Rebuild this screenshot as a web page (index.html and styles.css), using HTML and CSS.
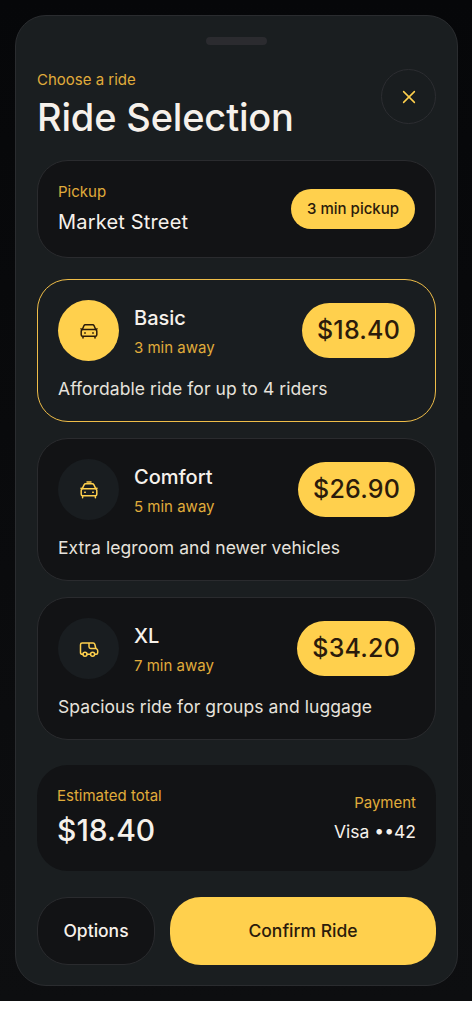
FILE: index.html
```html
<!DOCTYPE html>
<html lang="en">
<head>
<meta charset="utf-8">
<title>Ride Selection</title>
<link rel="stylesheet" href="styles.css">
</head>
<body>
<main class="screen">
  <section class="sheet">
    <div class="handle"></div>
    <header class="header">
      <div>
        <p class="label">Choose a ride</p>
        <h1 class="title">Ride Selection</h1>
      </div>
      <button class="close" aria-label="Close">
        <svg width="20" height="20" viewBox="0 0 20 20"><path d="M4.6 4.6 15.4 15.4M15.4 4.6 4.6 15.4"/></svg>
      </button>
    </header>

    <section class="card pickup">
      <div>
        <p class="label">Pickup</p>
        <p class="place">Market Street</p>
      </div>
      <span class="eta">3 min pickup</span>
    </section>

    <div class="rides">
      <article class="card ride selected">
        <div class="ride-top">
          <span class="icon"><svg width="20" height="20" viewBox="0 0 20 20"><path d="M3.4 8.3 4.9 4.7Q5.3 3.8 6.3 3.8H13.7Q14.7 3.8 15.1 4.7L16.6 8.3M2 7.9 3.4 8.6M16.6 8.6 18 7.9M4.2 8.6H15.8Q17.8 8.6 17.8 10.4V13.8Q17.8 15.3 16.4 15.3H3.6Q2.2 15.3 2.2 13.8V10.4Q2.2 8.6 4.2 8.6M4 15.3V17M16 15.3V17M5.7 12H6.3M13.7 12H14.3"/></svg></span>
          <div class="ride-info">
            <h2 class="name">Basic</h2>
            <p class="label">3 min away</p>
          </div>
          <span class="price">$18.40</span>
        </div>
        <p class="desc">Affordable ride for up to 4 riders</p>
      </article>
      <article class="card ride">
        <div class="ride-top">
          <span class="icon"><svg width="20" height="20" viewBox="0 0 20 20"><path d="M8 1.9H12M3.4 8.3 5.2 4.7Q5.6 3.8 6.6 3.8H13.4Q14.4 3.8 14.8 4.7L16.6 8.3M2 8.3 3.4 8.8M16.6 8.8 18 8.3M4.2 8.8H15.8Q17.8 8.8 17.8 10.6V14.3Q17.8 15.8 16.4 15.8H3.6Q2.2 15.8 2.2 14.3V10.6Q2.2 8.8 4.2 8.8M3.6 15.8V17.8M16.4 15.8V17.8M5.7 12.2H6.3M13.7 12.2H14.3"/></svg></span>
          <div class="ride-info">
            <h2 class="name">Comfort</h2>
            <p class="label">5 min away</p>
          </div>
          <span class="price">$26.90</span>
        </div>
        <p class="desc">Extra legroom and newer vehicles</p>
      </article>
      <article class="card ride">
        <div class="ride-top">
          <span class="icon"><svg width="20" height="20" viewBox="0 0 20 20"><path d="M4 15.2H3.2Q1.5 15.2 1.5 13.7V5.7Q1.5 4 3.2 4H14.2Q15.4 4 15.8 5.2L16.8 9.2 18 10.3Q18.7 11 18.7 12V13.7Q18.7 15.2 17.2 15.2H15.8M8.2 15.2H11.4M10 4V7.8Q10 9.4 11.6 9.4H16.8"/><circle cx="6" cy="15.2" r="2"/><circle cx="13.6" cy="15.2" r="2"/></svg></span>
          <div class="ride-info">
            <h2 class="name">XL</h2>
            <p class="label">7 min away</p>
          </div>
          <span class="price">$34.20</span>
        </div>
        <p class="desc">Spacious ride for groups and luggage</p>
      </article>
    </div>

    <section class="summary">
      <div>
        <p class="label">Estimated total</p>
        <p class="total">$18.40</p>
      </div>
      <div class="payment">
        <p class="label">Payment</p>
        <p class="method">Visa ••42</p>
      </div>
    </section>

    <footer class="actions">
      <button class="btn options">Options</button>
      <button class="btn confirm">Confirm Ride</button>
    </footer>
  </section>
</main>
</body>
</html>
```
FILE: styles.css
```css
* { box-sizing: border-box; margin: 0; padding: 0; }

body {
  background: #fff;
  font-family: Inter, "Liberation Sans", sans-serif;
  color: #f6f1eb;
}

.screen {
  height: 1001px;
  padding: 15px 14px 15px 15px;
  background: linear-gradient(#060709, #0d0e10);
}

.sheet {
  height: 971px;
  padding: 20.5px 21px 20px;
  border: 1px solid #2a2c2f;
  border-radius: 31px;
  background: #1a1e20;
}

.handle {
  width: 61px;
  height: 8px;
  margin: 0 auto;
  border-radius: 4px;
  background: #2b2b2f;
}

.header {
  display: flex;
  justify-content: space-between;
  align-items: flex-start;
  height: 91.5px;
  margin-top: 24px;
}

.label {
  font-size: 15px;
  line-height: 22px;
  color: #e0ac3b;
}

.title {
  margin-top: 1px;
  font-size: 38px;
  line-height: 50px;
  font-weight: 500;
  letter-spacing: -.17px;
}

.close {
  display: grid;
  place-items: center;
  width: 55px;
  height: 55px;
  margin-top: .5px;
  border: 1px solid #2c2d31;
  border-radius: 50%;
  background: #191d1f;
}

svg {
  fill: none;
  stroke: currentColor;
  stroke-width: 1.5;
  stroke-linecap: round;
  stroke-linejoin: round;
}

.close svg { color: #ffd04d; }

.card {
  border: 1px solid #2a2b2e;
  border-radius: 31px;
  background: #121315;
}

.pickup {
  display: flex;
  justify-content: space-between;
  align-items: center;
  height: 98px;
  padding: 0 20px;
}

.place {
  margin-top: 5px;
  font-size: 20px;
  line-height: 28px;
  padding-bottom: 2px;
  letter-spacing: .18px;
}

.eta {
  padding: 0 16px;
  border-radius: 20px;
  background: #ffd04d;
  color: #2b1b0b;
  font-size: 15px;
  line-height: 40px;
  font-weight: 500;
}

.rides {
  display: grid;
  gap: 16px;
  margin-top: 21px;
}

.ride {
  height: 143px;
  padding: 20px;
}

.ride.selected {
  border-color: #efbd48;
  background: #191d20;
}

.ride-top {
  display: flex;
  align-items: center;
  height: 61px;
}

.icon {
  display: grid;
  place-items: center;
  width: 61px;
  height: 61px;
  border-radius: 50%;
  background: #191d20;
  color: #ffd04d;
}

.selected .icon {
  background: #ffd04d;
  color: #2b1b0b;
}

.ride-info {
  flex: 1;
  margin-left: 15px;
}

.name {
  font-size: 20px;
  line-height: 30px;
  font-weight: 500;
}

.ride-info .label { margin-top: 4px; }

.price {
  padding: 0 15px;
  border-radius: 28px;
  background: #ffd04d;
  color: #2b1b0b;
  font-size: 25px;
  line-height: 55px;
  font-weight: 500;
  letter-spacing: .2px;
}

.desc {
  margin-top: 14px;
  font-size: 17.5px;
  line-height: 28px;
  letter-spacing: .07px;
  color: #e6e2dc;
}

.summary {
  display: flex;
  justify-content: space-between;
  align-items: center;
  height: 106px;
  margin-top: 25px;
  padding: 0 20px;
  border-radius: 31px;
  background: #121315;
}

.total {
  margin-top: 3px;
  padding-bottom: 1px;
  font-size: 30px;
  line-height: 40px;
  font-weight: 500;
}

.payment {
  padding-top: 2px;
  text-align: right;
}

.method {
  margin-top: 4px;
  font-size: 17.5px;
  line-height: 28px;
}

.actions {
  display: flex;
  gap: 15px;
  margin-top: 26px;
}

.btn {
  height: 68px;
  border: 0;
  border-radius: 31px;
  font: 500 17.5px/28px Inter, "Liberation Sans", sans-serif;
}

.options {
  width: 118px;
  border: 1px solid #2a2b2e;
  background: #121315;
  color: #f6f1eb;
}

.confirm {
  flex: 1;
  background: #ffd04d;
  color: #2b1b0b;
}
```
